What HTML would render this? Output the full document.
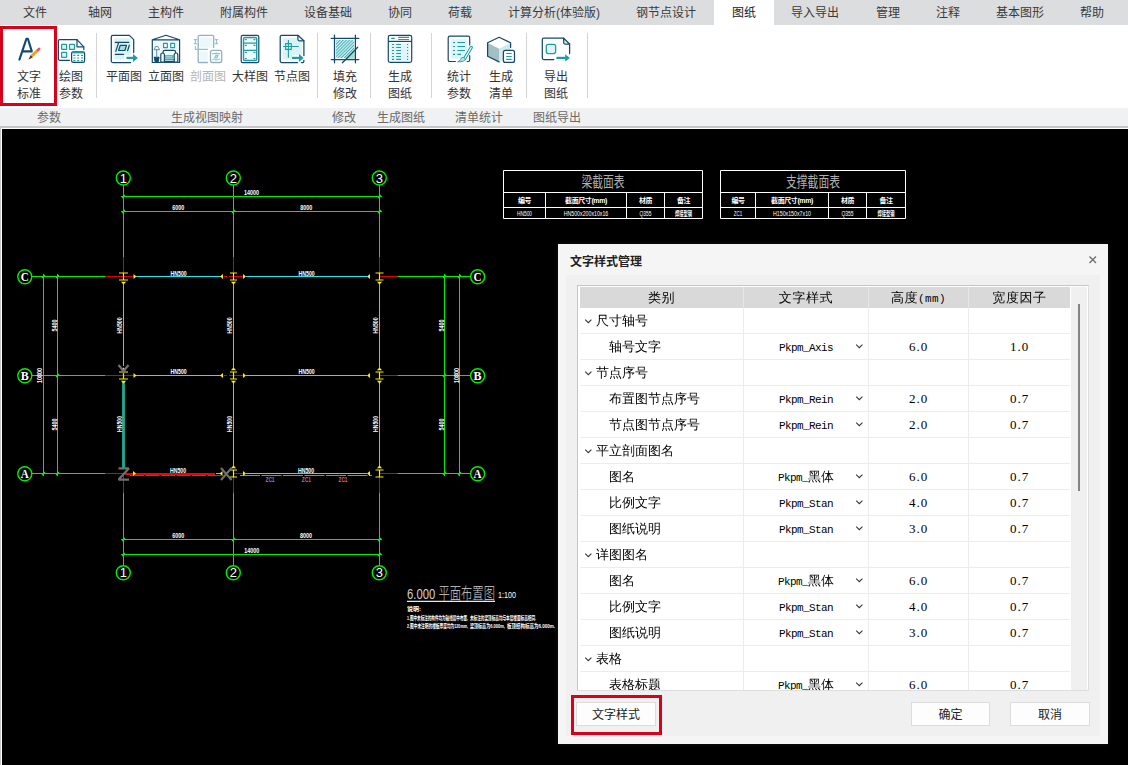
<!DOCTYPE html>
<html lang="zh-CN">
<head>
<meta charset="utf-8">
<title>图纸 - 文字样式管理</title>
<style>
html,body{margin:0;padding:0;}
body{width:1128px;height:765px;overflow:hidden;background:#000;position:relative;font-family:"Liberation Sans","Noto Sans CJK SC",sans-serif;font-size:12px;color:#333;}
.abs{position:absolute;}
#tabbar{position:absolute;left:0;top:0;width:1128px;height:25px;background:#dcdddf;}
#tabbar span{position:absolute;top:0;height:25px;line-height:27px;font-size:12px;color:#3a3a3a;transform:translateX(-50%);white-space:nowrap;}
#tabactive{position:absolute;left:714px;top:0;width:60px;height:25px;background:#fff;}
#ribbon{position:absolute;left:0;top:25px;width:1128px;height:83px;background:#fff;}
#grpbar{position:absolute;left:0;top:108px;width:1128px;height:18px;background:#eff1f2;}
#grpbar span{position:absolute;top:0;line-height:21px;font-size:12px;color:#6a6a6a;transform:translateX(-50%);white-space:nowrap;}
.rb{position:absolute;font-size:12px;line-height:17px;color:#333;text-align:center;transform:translateX(-50%);white-space:nowrap;}
.rb.dis{color:#b4b4b4;}
.sep{position:absolute;top:33px;width:1px;height:65px;background:#d4d4d4;}
#frame1{position:absolute;left:0;top:126px;width:1128px;height:2px;background:#c6c6c6;}
#frame2{position:absolute;left:0;top:128px;width:1128px;height:1px;background:#fff;}
#frameL1{position:absolute;left:0;top:126px;width:1px;height:639px;background:#c6c6c6;}
#frameL2{position:absolute;left:1px;top:128px;width:1px;height:637px;background:#fff;}
#canvas{position:absolute;left:2px;top:129px;width:1126px;height:636px;background:#000;}
.redbox{position:absolute;border:3px solid #d9001b;box-sizing:border-box;}
/* dialog */
#dlg{position:absolute;left:558px;top:244px;width:550px;height:500px;background:#f5f5f5;box-shadow:0 0 5px rgba(70,70,70,.3);}
#dlgtitle{position:absolute;left:12px;top:0;height:31px;line-height:36px;font-size:12px;font-weight:700;color:#222;}
#dlgbody{position:absolute;left:8px;top:31px;width:534px;height:461px;background:#f0f0f0;}
#tbl{position:absolute;left:577px;top:285px;width:512px;height:406px;box-sizing:border-box;border:1px solid #c6c6c6;border-right-color:#dedede;border-bottom-color:#dedede;background:#fff;}
#tblin{position:absolute;left:580px;top:287px;width:490px;height:403px;background:#fff;overflow:hidden;font-family:"Liberation Serif","WenQuanYi Zen Hei",serif;font-size:13px;color:#000;}
#sbar{position:absolute;left:1071px;top:287px;width:16px;height:403px;background:#f0f0f0;}
#thumb{position:absolute;left:1078px;top:304px;width:2px;height:187px;background:#848484;}
.hd{position:absolute;top:0;height:21px;background:#d9d9d9;line-height:22px;text-align:center;letter-spacing:0.6px;}
.row{position:absolute;left:0;width:490px;height:25px;border-bottom:1px solid #ececec;line-height:25px;}
.row span{position:absolute;top:0;white-space:nowrap;}
.vl{position:absolute;top:21px;width:1px;height:382px;background:#ececec;}
.c1g{left:16px;letter-spacing:0;}
.c1c{left:29px;letter-spacing:0;}
.c2{left:164px;width:124px;text-align:center;}
.c2 i,.hd i{font-style:normal;font-family:'Liberation Mono',monospace;font-size:11px;letter-spacing:-0.6px;}
.hd i{letter-spacing:0.4px;}
.c3{left:289px;width:99px;text-align:center;letter-spacing:1px;}
.c4{left:389px;width:101px;text-align:center;letter-spacing:1px;}
.btn{position:absolute;box-sizing:border-box;border:1px solid #dcdcdc;background:#fdfdfd;font-size:12px;color:#222;text-align:center;line-height:25px;height:24px;overflow:hidden;}
</style>
</head>
<body>
<div id="tabbar">
<div id="tabactive"></div>
<span style="left:35px">文件</span><span style="left:100px">轴网</span><span style="left:166px">主构件</span><span style="left:244px">附属构件</span><span style="left:328px">设备基础</span><span style="left:400px">协同</span><span style="left:460px">荷载</span><span style="left:554px">计算分析(体验版)</span><span style="left:666px">钢节点设计</span><span style="left:744px;color:#222">图纸</span><span style="left:815px">导入导出</span><span style="left:888px">管理</span><span style="left:948px">注释</span><span style="left:1020px">基本图形</span><span style="left:1092px">帮助</span>
</div>
<div id="ribbon"></div>
<!--RIBBON_START-->
<div class="rb" style="left:29px;top:69px">文字<br>标准</div>
<div class="rb" style="left:71px;top:69px">绘图<br>参数</div>
<div class="rb" style="left:124px;top:69px">平面图</div>
<div class="rb" style="left:166px;top:69px">立面图</div>
<div class="rb dis" style="left:208px;top:69px">剖面图</div>
<div class="rb" style="left:250px;top:69px">大样图</div>
<div class="rb" style="left:292px;top:69px">节点图</div>
<div class="rb" style="left:345px;top:69px">填充<br>修改</div>
<div class="rb" style="left:400px;top:69px">生成<br>图纸</div>
<div class="rb" style="left:459px;top:69px">统计<br>参数</div>
<div class="rb" style="left:501px;top:69px">生成<br>清单</div>
<div class="rb" style="left:556px;top:69px">导出<br>图纸</div>
<div class="sep" style="left:96px"></div><div class="sep" style="left:317px"></div><div class="sep" style="left:370px"></div><div class="sep" style="left:431px"></div><div class="sep" style="left:526px"></div><div class="sep" style="left:587px"></div>
<div class="redbox" style="left:0;top:26px;width:57px;height:80px"></div>
<svg class="abs" style="left:0;top:25px" width="620" height="83" viewBox="0 25 620 83" fill="none" stroke-linecap="round" stroke-linejoin="round">
<!-- icon1: A + pencil -->
<g stroke="#14496e" stroke-width="2.1">
<path d="M19.4 59.6 L26.4 38.8 L27.9 38.8 L31.8 51.4 M22.3 51.4 H31.8"/>
</g>
<path d="M31.8 56 L38 50" stroke="#f5a30c" stroke-width="2.9" stroke-linecap="butt"/>
<path d="M38 50 L39.2 48.85" stroke="#f2506a" stroke-width="2.6" stroke-linecap="round"/>
<path d="M30.6 54.9 L33 57.3 L28.4 59.8 Z" fill="#5b3a2a" stroke="none"/>
<!-- icon2: doc + grid -->
<g stroke="#14496e" stroke-width="1.2">
<path d="M69.5 60.3 H59.6 Q58.4 60.3 58.4 59.1 V40.8 Q58.4 39.6 59.6 39.6 H77 L83.8 46.8 V49.6"/>
<path d="M77 39.6 V46.8 H83.8"/>
</g>
<g stroke="#1f9ba3" stroke-width="1.2" fill="#e2f6f8">
<rect x="61.6" y="44.4" width="5" height="5" rx="0.6"/><rect x="69.5" y="44.4" width="5" height="5" rx="0.6"/><rect x="61.6" y="52.4" width="5" height="5" rx="0.6"/>
</g>
<rect x="71.6" y="51.8" width="13" height="10.6" rx="1.6" fill="#fff" stroke="#14496e" stroke-width="1.2"/>
<path d="M72.2 52.4 H84" stroke="#1f9ba3" stroke-width="2" stroke-linecap="butt"/>
<g stroke="#1f9ba3" stroke-width="1.1" stroke-linecap="butt">
<path d="M73.4 55.4h2M77.2 55.4h2M81 55.4h2M73.4 58h2M77.2 58h2M81 58h2M73.4 60.6h2M77.2 60.6h2M81 60.6h2"/>
</g>
<!-- icon3: plan view -->
<path d="M114.2 38.2 H130.7 V55 H124 V59.5 H114.2 Z" fill="#d9f3f6" stroke="none"/>
<g stroke="#14496e" stroke-width="1.25">
<path d="M130.6 62.5 H112.8 Q111.3 62.5 111.3 61 V36.9 Q111.3 35.4 112.8 35.4 H129.4 L133.7 39.6 V52.6"/>
</g>
<g stroke="#14496e" stroke-width="1.2">
<path d="M115.3 42.4 H128.8 M118.6 42.6 L115.8 51.4 M129.3 45.2 L127.6 50.7 M115.3 54.4 H123.4"/>
<path d="M120.2 45.4 H126.5 L124.9 50.5 H118.6 Z" fill="#a6e0d9"/>
</g>
<path d="M126.4 57.9 H133.4" stroke="#1f9ba3" stroke-width="2.2" stroke-linecap="butt"/>
<path d="M133 54 L137.9 57.9 L133 61.9 Z" fill="#1f9ba3" stroke="none"/>
<!-- icon4: elevation (house) -->
<path d="M152.3 40 H179.6 V62.5 H152.3 Z" fill="#eef9fb" stroke="none"/>
<g stroke="#14496e" stroke-width="1.2">
<path d="M152.3 39.8 L165.9 35.3 L179.6 39.8 M152.3 39.8 V62.5 H179.6 V39.8 Z"/>
<path d="M163 54 V52.2 Q163 50.4 164.8 50.4 H173.8 Q175.6 50.4 175.6 52.2 V54" fill="#fff"/>
<path d="M160.8 62.2 V55 Q160.8 53 162.6 53 Q164.4 53 164.4 55 V59.8 H174.2 V55 Q174.2 53 176 53 Q177.8 53 177.8 55 V62.2 Z" fill="#fff"/>
<path d="M164.4 59.8 V61.4 H174.2 V59.8" fill="#fff"/>
<path d="M154.4 57.4 H158.9 L158 62.2 H155.3 Z" fill="#14496e"/>
</g>
<g stroke="#5d8fb0" stroke-width="1">
<path d="M156.7 49.4 V57.2 M154.3 49.4 L155.6 46.5 H157.9 L159.4 49.4 Z" fill="#fff"/>
</g>
<g stroke="#1f9ba3" stroke-width="1.1" fill="#eaf8fa">
<rect x="163.5" y="43.4" width="3.9" height="4.2"/><rect x="170.7" y="43.4" width="3.9" height="4.2"/>
<rect x="165.6" y="55.7" width="7.4" height="2.4" fill="#a6e0d9" stroke-width="0.8"/>
</g>
<!-- icon5: section (disabled) -->
<g opacity="0.55">
<rect x="200" y="37.2" width="11.8" height="10.4" fill="#dcf3f8"/><rect x="200" y="51.4" width="7.6" height="9.2" fill="#dcf3f8"/>
<path d="M207.6 62.5 H199.4 Q198.2 62.5 198.2 61.3 V36.5 Q198.2 35.3 199.4 35.3 H212.5 Q213.7 35.3 213.7 36.5 V47.4" stroke="#3f6f95" stroke-width="1.3"/>
<rect x="210.5" y="50.4" width="11.2" height="12.1" rx="2" stroke="#3f6f95" stroke-width="1.3" fill="#fff"/>
<g stroke="#1fa6aa" stroke-width="1.1">
<path d="M195.4 39.8 V43.4 M194.2 39.6 H196.6 M194.2 43.6 H196.6 M216.5 39.8 V43.4 M215.3 39.6 H217.7 M215.3 43.6 H217.7"/>
<path d="M195.4 46.4 V49.4 H207.6"/>
<path d="M212.5 53.6 H219.8 M216.1 52.6 V53.6 M212.5 59.3 H219.8 M216.1 59.3 V60.3"/>
<path d="M214.6 57.6 L216 55.4 H218.2 L216.8 57.6 Z" fill="#7fd3d0"/>
</g>
</g>
<!-- icon6: detail -->
<rect x="241.2" y="35.3" width="17.6" height="27.3" rx="1.6" fill="#fff" stroke="#14496e" stroke-width="1.2"/>
<rect x="243.5" y="37.5" width="13.2" height="23" rx="1.6" fill="#eefafc" stroke="#1f9ba3" stroke-width="1.4"/>
<g stroke="#1f9ba3" stroke-width="1.2">
<path d="M244 43.2 H256.4 M244 50.3 H256.4"/>
<path d="M245.4 39.6h.8M254 39.6h.8M245.4 45.4h.8M254 45.4h.8M245.4 52.4h.8M254 52.4h.8M245.4 58.6h.8M254 58.6h.8" stroke-width="1.4"/>
</g>
<!-- icon7: node -->
<path d="M282.8 38 H297 V41.6 H301.9 V55 H292 V59.5 H282.8 Z" fill="#d9f3f6" stroke="none"/>
<g stroke="#14496e" stroke-width="1.25">
<path d="M297.6 62.5 H281.7 Q280.2 62.5 280.2 61 V36.8 Q280.2 35.3 281.7 35.3 H297.9 L303.9 40.8 V55.6"/>
<path d="M297.9 35.3 V39.6 Q297.9 40.8 299.1 40.8 H303.9" />
<path d="M303.9 60.4 V61.2 Q303.9 62.5 302.6 62.5 H301.4"/>
</g>
<g stroke="#1f9ba3" stroke-width="1.1" stroke-linecap="butt">
<path d="M288.4 40 V57.8 M283.2 46.5 H298.8"/>
<rect x="285.6" y="43.6" width="5.7" height="5.8" fill="none"/>
</g>
<path d="M292 57.9 H299.4" stroke="#1f9ba3" stroke-width="2.2" stroke-linecap="butt"/>
<path d="M299 54 L303.7 57.9 L299 61.9 Z" fill="#1f9ba3" stroke="none"/>
<!-- icon8: hatch -->
<defs><pattern id="hat" width="2.2" height="2.2" patternUnits="userSpaceOnUse" patternTransform="rotate(-45)"><rect width="2.2" height="2.2" fill="#e4f7f8"/><rect width="2.2" height="1" fill="#2fa9ae"/></pattern></defs>
<rect x="336" y="40" width="18" height="18" rx="1.5" fill="url(#hat)" stroke="none"/>
<path d="M354.7 50.6 V58.8 H346.6 Z" fill="#9fe0d6" stroke="none"/>
<g stroke="#14496e" stroke-width="1.25">
<path d="M334.5 35.2 V62.8 M355.4 35.2 V62.8 M331.2 38.4 H358.8 M331.2 59.5 H358.8"/>
<path d="M342.4 62.8 L357.7 47.2" stroke-width="1.3"/>
</g>
<!-- icon9: sheet list -->
<rect x="390.4" y="43.2" width="19.2" height="17.4" fill="#dff5f8" stroke="none"/>
<rect x="388.3" y="35.4" width="23.4" height="27" rx="1.8" stroke="#14496e" stroke-width="1.2"/>
<path d="M388.3 41.4 H411.7" stroke="#14496e" stroke-width="1.2" stroke-linecap="butt"/>
<g stroke="#1f9ba3" stroke-width="1.2" stroke-linecap="butt">
<path d="M391.2 38.4 h3.6 M398.2 37.4 H409 M398.2 39.5 H409"/>
<path d="M392 44.5h2M396.2 44.5h4.8M407 44.5h1.1 M392 47.5h2M396.2 47.5h4.8M407 47.5h1.1 M392 50.5h2M396.2 50.5h4.8M407 50.5h1.1 M392 53.5h2M396.2 53.5h4.8M407 53.5h1.1 M392 56.5h2M396.2 56.5h4.8M407 56.5h1.1 M392 59.4h2M396.2 59.4h4.8M407 59.4h1.1"/>
</g>
<!-- icon10: stats + brush -->
<rect x="451" y="39.2" width="16" height="19.5" fill="#dff5f8" stroke="none"/>
<g stroke="#14496e" stroke-width="1.2">
<path d="M455.4 61.5 H449.8 Q448.2 61.5 448.2 59.9 V37.8 Q448.2 36.2 449.8 36.2 H468.1 Q469.7 36.2 469.7 37.8 V45"/>
<path d="M469.7 55.6 V60 Q469.7 61.5 468.2 61.5 H467.2"/>
</g>
<g stroke="#1f9ba3" stroke-width="1.2" stroke-linecap="butt">
<path d="M453 42.5h2M457.4 42.5H465 M453 46.5h2M457.4 46.5H465 M453 50.5h2M457.4 50.5H465 M453 54.4h2M457.4 54.4H461"/>
</g>
<path d="M471.3 47.4 L464.6 58.6" stroke="#1f9ba3" stroke-width="3.2"/>
<path d="M471.3 47.4 L464.6 58.6" stroke="#e9f8f9" stroke-width="1.2"/>
<path d="M458 61.8 Q461 60.5 461.8 57.6 Q464 56.8 465.6 59 Q464.8 62 458 61.8 Z" fill="#bfe8e8" stroke="#1f9ba3" stroke-width="0.9"/>
<!-- icon11: cube + list -->
<path d="M487.6 42.8 L499.1 48.4 V61.9 L487.6 56.3 Z" fill="#a4bfc2" stroke="none"/>
<path d="M499.1 48.4 L510.6 42.8 V56.3 L499.1 61.9 Z" fill="#cfe9ec" stroke="none"/>
<path d="M499.1 37.2 L510.6 42.8 L499.1 48.4 L487.6 42.8 Z" fill="#fff" stroke="none"/>
<path d="M510.6 47.4 V42.8 L499.1 37.2 L487.6 42.8 V56.3 L499.1 61.9" stroke="#14496e" stroke-width="1.25"/>
<rect x="503.4" y="50.4" width="11.1" height="12" rx="2" fill="#fff" stroke="#14496e" stroke-width="1.25"/>
<path d="M506.2 53.5 H511.7 M506.2 56.5 H511.7 M506.2 59.4 H511.7" stroke="#1f9ba3" stroke-width="1.2" stroke-linecap="butt"/>
<!-- icon12: export -->
<path d="M563.7 38.4 V42.8 Q563.7 44 564.9 44 H569.4 Z" fill="#dff5f8" stroke="none"/>
<g stroke="#14496e" stroke-width="1.25">
<path d="M553.8 59.5 H543.8 Q542.3 59.5 542.3 58 V39.7 Q542.3 38.2 543.8 38.2 H563.7 L569.6 44 V53.6"/>
<path d="M563.7 38.2 V42.8 Q563.7 44 564.9 44 H569.6"/>
</g>
<rect x="546.3" y="44.3" width="9.3" height="9.3" rx="2" fill="#e0f6f8" stroke="#1f9ba3" stroke-width="1.3"/>
<path d="M556.4 57.9 H565.6" stroke="#1f9ba3" stroke-width="2.2" stroke-linecap="butt"/>
<path d="M565.2 54.2 L569.9 57.9 L565.2 61.6 Z" fill="#1f9ba3" stroke="none"/>
</svg>
<!--RIBBON_END-->
<div id="grpbar">
<span style="left:49px">参数</span><span style="left:207px">生成视图映射</span><span style="left:344px">修改</span><span style="left:401px">生成图纸</span><span style="left:479px">清单统计</span><span style="left:557px">图纸导出</span>
</div>
<div id="frame1"></div><div id="frame2"></div><div id="frameL1"></div><div id="frameL2"></div>
<div id="canvas"></div>
<!--DRAWING_START-->
<svg class="abs" style="left:2px;top:129px" width="1126" height="636" viewBox="2 129 1126 636" fill="none" font-family="'Liberation Sans','Noto Sans CJK SC',sans-serif">
<path d="M123.5 185 V257.5" stroke="#00ee00"/>
<path d="M123.5 257.5 V276.5" stroke="#e00000"/>
<path d="M123.5 473.5 V492.5" stroke="#e00000"/>
<path d="M123.5 492.5 V566" stroke="#00ee00"/>
<path d="M233.5 185 V257.5" stroke="#00ee00"/>
<path d="M233.5 257.5 V276.5" stroke="#e00000"/>
<path d="M233.5 473.5 V492.5" stroke="#e00000"/>
<path d="M233.5 492.5 V566" stroke="#00ee00"/>
<path d="M379.5 185 V257.5" stroke="#00ee00"/>
<path d="M379.5 257.5 V276.5" stroke="#e00000"/>
<path d="M379.5 473.5 V492.5" stroke="#e00000"/>
<path d="M379.5 492.5 V566" stroke="#00ee00"/>
<path d="M32 276.5 H105" stroke="#00ee00"/>
<path d="M105 276.5 H123.5" stroke="#e00000"/>
<path d="M379.5 276.5 H397.5" stroke="#e00000"/>
<path d="M397.5 276.5 H470" stroke="#00ee00"/>
<path d="M32 375.5 H105" stroke="#00ee00"/>
<path d="M105 375.5 H123.5" stroke="#e00000"/>
<path d="M379.5 375.5 H397.5" stroke="#e00000"/>
<path d="M397.5 375.5 H470" stroke="#00ee00"/>
<path d="M32 473.5 H105" stroke="#00ee00"/>
<path d="M105 473.5 H123.5" stroke="#e00000"/>
<path d="M379.5 473.5 H397.5" stroke="#e00000"/>
<path d="M397.5 473.5 H470" stroke="#00ee00"/>
<path d="M121 196.5 H382 M121 211.5 H382 M121 539.5 H382 M121 554.5 H382" stroke="#00ee00"/>
<path d="M122.0 198.0 L125.0 195.0" stroke="#00ee00" stroke-width="1.2"/>
<path d="M122.0 213.0 L125.0 210.0" stroke="#00ee00" stroke-width="1.2"/>
<path d="M122.0 541.0 L125.0 538.0" stroke="#00ee00" stroke-width="1.2"/>
<path d="M122.0 556.0 L125.0 553.0" stroke="#00ee00" stroke-width="1.2"/>
<path d="M232.0 213.0 L235.0 210.0" stroke="#00ee00" stroke-width="1.2"/>
<path d="M232.0 541.0 L235.0 538.0" stroke="#00ee00" stroke-width="1.2"/>
<path d="M378.0 198.0 L381.0 195.0" stroke="#00ee00" stroke-width="1.2"/>
<path d="M378.0 213.0 L381.0 210.0" stroke="#00ee00" stroke-width="1.2"/>
<path d="M378.0 541.0 L381.0 538.0" stroke="#00ee00" stroke-width="1.2"/>
<path d="M378.0 556.0 L381.0 553.0" stroke="#00ee00" stroke-width="1.2"/>
<path d="M43.5 274 V476 M57.5 274 V476 M444.5 274 V476 M459.5 274 V476" stroke="#00ee00"/>
<path d="M42.0 278.0 L45.0 275.0" stroke="#00ee00" stroke-width="1.2"/>
<path d="M42.0 475.0 L45.0 472.0" stroke="#00ee00" stroke-width="1.2"/>
<path d="M56.0 278.0 L59.0 275.0" stroke="#00ee00" stroke-width="1.2"/>
<path d="M56.0 377.0 L59.0 374.0" stroke="#00ee00" stroke-width="1.2"/>
<path d="M56.0 475.0 L59.0 472.0" stroke="#00ee00" stroke-width="1.2"/>
<path d="M443.0 278.0 L446.0 275.0" stroke="#00ee00" stroke-width="1.2"/>
<path d="M443.0 377.0 L446.0 374.0" stroke="#00ee00" stroke-width="1.2"/>
<path d="M443.0 475.0 L446.0 472.0" stroke="#00ee00" stroke-width="1.2"/>
<path d="M458.0 278.0 L461.0 275.0" stroke="#00ee00" stroke-width="1.2"/>
<path d="M458.0 475.0 L461.0 472.0" stroke="#00ee00" stroke-width="1.2"/>
<g stroke="#22e4ee">
<path d="M136 276.5 H221 M246 276.5 H367"/>
<path d="M136 375.5 H221 M246 375.5 H367"/>
<path d="M246 473.5 H367"/>
<path d="M233.5 284 V368 M233.5 383 V466"/>
<path d="M379.5 284 V368 M379.5 383 V466"/>
<path d="M123.5 284 V366"/>
</g>
<path d="M123.5 382 V468" stroke="#18b094" stroke-width="2.8"/>
<path d="M125 474.0 H215" stroke="#f40000" stroke-width="2"/>
<path d="M130 475.5 H222" stroke="#c0189a" stroke-width="1" stroke-dasharray="14 1.5"/>
<path d="M216 473.5 H222" stroke="#22e4ee"/>
<path d="M240 475.5 H372" stroke="#d65fa6" stroke-width="1" stroke-dasharray="20 1.5"/>
<path d="M123.5 276.5 H134 M224 276.5 H227 M229 276.5 H244" stroke="#e00000"/>
<path d="M123.5 375.5 H134 M224 375.5 H227 M229 375.5 H244" stroke="#e00000"/>
<path d="M233.5 473.5 H244" stroke="#e00000"/>
<g stroke="#ffee00" stroke-width="1.15"><path d="M119.0 273.0 H128.0 M119.0 280.0 H128.0 M123.5 273.0 V280.0"/></g>
<path d="M120.9 281.7 H126.1 L123.5 284.5 Z" fill="#ffee00"/>
<g stroke="#ffee00" stroke-width="1.15"><path d="M230.0 273.0 H237.0 M230.0 280.0 H237.0 M233.5 273.0 V280.0"/></g>
<path d="M230.9 281.7 H236.1 L233.5 284.5 Z" fill="#ffee00"/>
<g stroke="#ffee00" stroke-width="1.15"><path d="M375.5 273.0 H383.5 M375.5 280.0 H383.5 M379.5 273.0 V280.0"/></g>
<path d="M376.9 281.7 H382.1 L379.5 284.5 Z" fill="#ffee00"/>
<g stroke="#ffee00" stroke-width="1.15"><path d="M119.0 372.0 H128.0 M119.0 379.0 H128.0 M123.5 372.0 V379.0"/></g>
<path d="M120.9 380.7 H126.1 L123.5 383.5 Z" fill="#ffee00"/>
<path d="M120.9 370.3 H126.1 L123.5 367.5 Z" fill="#ffee00"/>
<g stroke="#ffee00" stroke-width="1.15"><path d="M230.0 372.0 H237.0 M230.0 379.0 H237.0 M233.5 372.0 V379.0"/></g>
<path d="M230.9 380.7 H236.1 L233.5 383.5 Z" fill="#ffee00"/>
<path d="M230.9 370.3 H236.1 L233.5 367.5 Z" fill="#ffee00"/>
<g stroke="#ffee00" stroke-width="1.15"><path d="M375.5 372.0 H383.5 M375.5 379.0 H383.5 M379.5 372.0 V379.0"/></g>
<path d="M376.9 380.7 H382.1 L379.5 383.5 Z" fill="#ffee00"/>
<path d="M376.9 370.3 H382.1 L379.5 367.5 Z" fill="#ffee00"/>
<g stroke="#ffee00" stroke-width="1.15"><path d="M230.0 470.0 H237.0 M230.0 477.0 H237.0 M233.5 470.0 V477.0"/></g>
<path d="M230.9 468.3 H236.1 L233.5 465.5 Z" fill="#ffee00"/>
<g stroke="#ffee00" stroke-width="1.15"><path d="M375.5 470.0 H383.5 M375.5 477.0 H383.5 M379.5 470.0 V477.0"/></g>
<path d="M376.9 468.3 H382.1 L379.5 465.5 Z" fill="#ffee00"/>
<path d="M133.5 273.9 V279.1 L136.5 276.5 Z" fill="#ffee00"/>
<path d="M223 273.9 V279.1 L220 276.5 Z" fill="#ffee00"/>
<path d="M243 273.9 V279.1 L246 276.5 Z" fill="#ffee00"/>
<path d="M370 273.9 V279.1 L367 276.5 Z" fill="#ffee00"/>
<path d="M133.5 372.9 V378.1 L136.5 375.5 Z" fill="#ffee00"/>
<path d="M223 372.9 V378.1 L220 375.5 Z" fill="#ffee00"/>
<path d="M243 372.9 V378.1 L246 375.5 Z" fill="#ffee00"/>
<path d="M370 372.9 V378.1 L367 375.5 Z" fill="#ffee00"/>
<path d="M133 470.9 V476.1 L136 473.5 Z" fill="#ffee00"/>
<path d="M243 470.9 V476.1 L246 473.5 Z" fill="#ffee00"/>
<path d="M370 470.9 V476.1 L367 473.5 Z" fill="#ffee00"/>
<path d="M222.5 470.9 V476.1 L219.5 473.5 Z" fill="#ffee00"/>
<g stroke="#707070" stroke-width="2.2" stroke-linecap="butt">
<path d="M118.5 365 L123.5 371 L128.5 365 M123.5 371 V373.5"/>
<path d="M118.5 468.4 H128.8 L118.6 479.6 H129" stroke-linejoin="bevel"/>
<path d="M221 468 L231.5 480 M231.5 468 L221 480"/>
</g>
<circle cx="123.3" cy="178" r="7" stroke="#00ee00" stroke-width="1.4" fill="#000"/>
<text x="123.3" y="182.6" text-anchor="middle" font-size="13" fill="#ffffff">1</text>
<circle cx="123.3" cy="572.7" r="7" stroke="#00ee00" stroke-width="1.4" fill="#000"/>
<text x="123.3" y="577.3000000000001" text-anchor="middle" font-size="13" fill="#ffffff">1</text>
<circle cx="233.3" cy="178" r="7" stroke="#00ee00" stroke-width="1.4" fill="#000"/>
<text x="233.3" y="182.6" text-anchor="middle" font-size="13" fill="#ffffff">2</text>
<circle cx="233.3" cy="572.7" r="7" stroke="#00ee00" stroke-width="1.4" fill="#000"/>
<text x="233.3" y="577.3000000000001" text-anchor="middle" font-size="13" fill="#ffffff">2</text>
<circle cx="379.3" cy="178" r="7" stroke="#00ee00" stroke-width="1.4" fill="#000"/>
<text x="379.3" y="182.6" text-anchor="middle" font-size="13" fill="#ffffff">3</text>
<circle cx="379.3" cy="572.7" r="7" stroke="#00ee00" stroke-width="1.4" fill="#000"/>
<text x="379.3" y="577.3000000000001" text-anchor="middle" font-size="13" fill="#ffffff">3</text>
<circle cx="24.8" cy="276.7" r="7" stroke="#00ee00" stroke-width="1.4" fill="#000"/>
<text x="20.8" y="281.3" font-family="'Liberation Serif',serif" font-weight="700" font-size="13.5" fill="#ffffff" textLength="8" lengthAdjust="spacingAndGlyphs">C</text>
<circle cx="477.6" cy="276.7" r="7" stroke="#00ee00" stroke-width="1.4" fill="#000"/>
<text x="473.6" y="281.3" font-family="'Liberation Serif',serif" font-weight="700" font-size="13.5" fill="#ffffff" textLength="8" lengthAdjust="spacingAndGlyphs">C</text>
<circle cx="24.8" cy="375.7" r="7" stroke="#00ee00" stroke-width="1.4" fill="#000"/>
<text x="20.8" y="380.3" font-family="'Liberation Serif',serif" font-weight="700" font-size="13.5" fill="#ffffff" textLength="8" lengthAdjust="spacingAndGlyphs">B</text>
<circle cx="477.6" cy="375.7" r="7" stroke="#00ee00" stroke-width="1.4" fill="#000"/>
<text x="473.6" y="380.3" font-family="'Liberation Serif',serif" font-weight="700" font-size="13.5" fill="#ffffff" textLength="8" lengthAdjust="spacingAndGlyphs">B</text>
<circle cx="24.8" cy="473.7" r="7" stroke="#00ee00" stroke-width="1.4" fill="#000"/>
<text x="20.8" y="478.3" font-family="'Liberation Serif',serif" font-weight="700" font-size="13.5" fill="#ffffff" textLength="8" lengthAdjust="spacingAndGlyphs">A</text>
<circle cx="477.6" cy="473.7" r="7" stroke="#00ee00" stroke-width="1.4" fill="#000"/>
<text x="473.6" y="478.3" font-family="'Liberation Serif',serif" font-weight="700" font-size="13.5" fill="#ffffff" textLength="8" lengthAdjust="spacingAndGlyphs">A</text>
<text x="244.0" y="195" font-size="8" fill="#ffffff" font-weight="700" textLength="15" lengthAdjust="spacingAndGlyphs">14000</text>
<text x="172.3" y="209.8" font-size="8" fill="#ffffff" font-weight="700" textLength="12" lengthAdjust="spacingAndGlyphs">6000</text>
<text x="300.2" y="209.8" font-size="8" fill="#ffffff" font-weight="700" textLength="12" lengthAdjust="spacingAndGlyphs">8000</text>
<text x="172.3" y="538.4" font-size="8" fill="#ffffff" font-weight="700" textLength="12" lengthAdjust="spacingAndGlyphs">6000</text>
<text x="300.0" y="538.4" font-size="8" fill="#ffffff" font-weight="700" textLength="12" lengthAdjust="spacingAndGlyphs">8000</text>
<text x="244.2" y="553.2" font-size="8" fill="#ffffff" font-weight="700" textLength="15" lengthAdjust="spacingAndGlyphs">14000</text>
<text x="50.8" y="325.5" font-size="8" fill="#ffffff" font-weight="700" textLength="12" lengthAdjust="spacingAndGlyphs" transform="rotate(-90 56.8 325.5)">5400</text>
<text x="437.6" y="325.5" font-size="8" fill="#ffffff" font-weight="700" textLength="12" lengthAdjust="spacingAndGlyphs" transform="rotate(-90 443.6 325.5)">5400</text>
<text x="50.8" y="424.5" font-size="8" fill="#ffffff" font-weight="700" textLength="12" lengthAdjust="spacingAndGlyphs" transform="rotate(-90 56.8 424.5)">5400</text>
<text x="437.6" y="424.5" font-size="8" fill="#ffffff" font-weight="700" textLength="12" lengthAdjust="spacingAndGlyphs" transform="rotate(-90 443.6 424.5)">5400</text>
<text x="34.3" y="375.5" font-size="8" fill="#ffffff" font-weight="700" textLength="15" lengthAdjust="spacingAndGlyphs" transform="rotate(-90 41.8 375.5)">10800</text>
<text x="451.1" y="375.5" font-size="8" fill="#ffffff" font-weight="700" textLength="15" lengthAdjust="spacingAndGlyphs" transform="rotate(-90 458.6 375.5)">10800</text>
<text x="170.6" y="275.8" font-size="8" fill="#ffffff" font-weight="700" textLength="16" lengthAdjust="spacingAndGlyphs">HN500</text>
<text x="298.6" y="275.8" font-size="8" fill="#ffffff" font-weight="700" textLength="16" lengthAdjust="spacingAndGlyphs">HN500</text>
<text x="170.6" y="374" font-size="8" fill="#ffffff" font-weight="700" textLength="16" lengthAdjust="spacingAndGlyphs">HN500</text>
<text x="298.6" y="374" font-size="8" fill="#ffffff" font-weight="700" textLength="16" lengthAdjust="spacingAndGlyphs">HN500</text>
<text x="170.0" y="472.6" font-size="8" fill="#ffffff" font-weight="700" textLength="16" lengthAdjust="spacingAndGlyphs">HN500</text>
<text x="298.0" y="472.6" font-size="8" fill="#ffffff" font-weight="700" textLength="16" lengthAdjust="spacingAndGlyphs">HN500</text>
<text x="114.2" y="325.5" font-size="8" fill="#ffffff" font-weight="700" textLength="16" lengthAdjust="spacingAndGlyphs" transform="rotate(-90 122.2 325.5)">HN500</text>
<text x="114.2" y="424" font-size="8" fill="#ffffff" font-weight="700" textLength="16" lengthAdjust="spacingAndGlyphs" transform="rotate(-90 122.2 424)">HN500</text>
<text x="223.8" y="325.5" font-size="8" fill="#ffffff" font-weight="700" textLength="16" lengthAdjust="spacingAndGlyphs" transform="rotate(-90 231.8 325.5)">HN500</text>
<text x="223.8" y="424" font-size="8" fill="#ffffff" font-weight="700" textLength="16" lengthAdjust="spacingAndGlyphs" transform="rotate(-90 231.8 424)">HN500</text>
<text x="369.8" y="325.5" font-size="8" fill="#ffffff" font-weight="700" textLength="16" lengthAdjust="spacingAndGlyphs" transform="rotate(-90 377.8 325.5)">HN500</text>
<text x="369.8" y="424" font-size="8" fill="#ffffff" font-weight="700" textLength="16" lengthAdjust="spacingAndGlyphs" transform="rotate(-90 377.8 424)">HN500</text>
<text x="265.5" y="482.3" font-size="7.5" fill="#d65fa6" font-weight="700" textLength="9" lengthAdjust="spacingAndGlyphs">ZC1</text>
<text x="301.8" y="482.3" font-size="7.5" fill="#d65fa6" font-weight="700" textLength="9" lengthAdjust="spacingAndGlyphs">ZC1</text>
<text x="338.5" y="482.3" font-size="7.5" fill="#d65fa6" font-weight="700" textLength="9" lengthAdjust="spacingAndGlyphs">ZC1</text>
<text x="407" y="598.8" font-size="15.5" fill="#d0d0d0" font-weight="300" textLength="88" lengthAdjust="spacingAndGlyphs">6.000 平面布置图</text>
<path d="M407 601.3 H495" stroke="#e8e8e8" stroke-width="1.2"/>
<text x="498" y="598.2" font-size="9.5" fill="#ffffff" textLength="18" lengthAdjust="spacingAndGlyphs">1:100</text>
<text x="407" y="611.2" font-size="6" fill="#ffffff" font-weight="700">说明:</text>
<text x="407" y="619.9" font-size="5.8" fill="#ffffff" font-weight="700" textLength="61" lengthAdjust="spacingAndGlyphs">1.图中未标注的构件均为轴线居中布置,</text>
<text x="470" y="619.9" font-size="5.8" fill="#ffffff" font-weight="700" textLength="66" lengthAdjust="spacingAndGlyphs">未标注的梁顶标高均与本层楼面标高相同.</text>
<text x="407" y="627.9" font-size="5.8" fill="#ffffff" font-weight="700" textLength="61" lengthAdjust="spacingAndGlyphs">2.图中未注明的楼板厚度均为120mm,</text>
<text x="470" y="627.9" font-size="5.8" fill="#ffffff" font-weight="700" textLength="35" lengthAdjust="spacingAndGlyphs">梁顶标高为6.000m,</text>
<text x="507" y="627.9" font-size="5.8" fill="#ffffff" font-weight="700" textLength="48" lengthAdjust="spacingAndGlyphs">板顶结构标高为6.000m.</text>
<path d="M503.5 170.5 H702.5 V218.5 H503.5 Z M503.5 192.5 H702.5 M503.5 207.5 H702.5" stroke="#ffffff" stroke-width="1"/>
<path d="M545.5 192.5 V218.5" stroke="#ffffff" stroke-width="1"/>
<path d="M626.5 192.5 V218.5" stroke="#ffffff" stroke-width="1"/>
<path d="M664.5 192.5 V218.5" stroke="#ffffff" stroke-width="1"/>
<text x="603.0" y="187" text-anchor="middle" font-size="14.5" fill="#b0b0b0" font-weight="400" textLength="43.2" lengthAdjust="spacingAndGlyphs">梁截面表</text>
<text x="524.5" y="202.6" text-anchor="middle" font-size="7" fill="#ffffff" font-weight="700" letter-spacing="-0.4">编号</text>
<text x="517.0" y="215.6" font-size="7" fill="#ffffff" font-weight="400" textLength="15" lengthAdjust="spacingAndGlyphs">HN500</text>
<text x="586.0" y="202.6" text-anchor="middle" font-size="7" fill="#ffffff" font-weight="700" letter-spacing="-0.4">截面尺寸(mm)</text>
<text x="563.75" y="215.6" font-size="7" fill="#ffffff" font-weight="400" textLength="44.5" lengthAdjust="spacingAndGlyphs">HN500x200x10x16</text>
<text x="645.5" y="202.6" text-anchor="middle" font-size="7" fill="#ffffff" font-weight="700" letter-spacing="-0.4">材质</text>
<text x="639.5" y="215.6" font-size="7" fill="#ffffff" font-weight="400" textLength="12" lengthAdjust="spacingAndGlyphs">Q355</text>
<text x="683.5" y="202.6" text-anchor="middle" font-size="7" fill="#ffffff" font-weight="700" letter-spacing="-0.4">备注</text>
<text x="675.0" y="215.6" font-size="7" fill="#ffffff" font-weight="700" textLength="17" lengthAdjust="spacingAndGlyphs">焊接型钢</text>
<path d="M720.5 170.5 H905.5 V218.5 H720.5 Z M720.5 192.5 H905.5 M720.5 207.5 H905.5" stroke="#ffffff" stroke-width="1"/>
<path d="M755.5 192.5 V218.5" stroke="#ffffff" stroke-width="1"/>
<path d="M828.5 192.5 V218.5" stroke="#ffffff" stroke-width="1"/>
<path d="M866.5 192.5 V218.5" stroke="#ffffff" stroke-width="1"/>
<text x="813.0" y="187" text-anchor="middle" font-size="14.5" fill="#b0b0b0" font-weight="400" textLength="54.0" lengthAdjust="spacingAndGlyphs">支撑截面表</text>
<text x="738.0" y="202.6" text-anchor="middle" font-size="7" fill="#ffffff" font-weight="700" letter-spacing="-0.4">编号</text>
<text x="733.75" y="215.6" font-size="7" fill="#ffffff" font-weight="400" textLength="8.5" lengthAdjust="spacingAndGlyphs">ZC1</text>
<text x="792.0" y="202.6" text-anchor="middle" font-size="7" fill="#ffffff" font-weight="700" letter-spacing="-0.4">截面尺寸(mm)</text>
<text x="773.0" y="215.6" font-size="7" fill="#ffffff" font-weight="400" textLength="38" lengthAdjust="spacingAndGlyphs">H150x150x7x10</text>
<text x="847.5" y="202.6" text-anchor="middle" font-size="7" fill="#ffffff" font-weight="700" letter-spacing="-0.4">材质</text>
<text x="841.5" y="215.6" font-size="7" fill="#ffffff" font-weight="400" textLength="12" lengthAdjust="spacingAndGlyphs">Q355</text>
<text x="886.0" y="202.6" text-anchor="middle" font-size="7" fill="#ffffff" font-weight="700" letter-spacing="-0.4">备注</text>
<text x="877.5" y="215.6" font-size="7" fill="#ffffff" font-weight="700" textLength="17" lengthAdjust="spacingAndGlyphs">焊接型钢</text>
</svg>
<!--DRAWING_END-->
<!--DIALOG_START-->
<div id="dlg"><div id="dlgtitle">文字样式管理</div><div id="dlgbody"></div>
<svg class="abs" style="left:530px;top:11px" width="10" height="10" viewBox="0 0 10 10"><path d="M1.5 1.5 L8 8 M8 1.5 L1.5 8" stroke="#707070" stroke-width="1.4" fill="none"/></svg>
</div>
<div id="tbl"></div><div id="sbar"></div><div id="thumb"></div>
<div id="tblin">
<div class="hd" style="left:0;width:163px">类别</div><div class="hd" style="left:164px;width:124px">文字样式</div><div class="hd" style="left:289px;width:99px">高度<i>(mm)</i></div><div class="hd" style="left:389px;width:101px">宽度因子</div>
<div class="hd" style="left:163px;width:1px;background:#e6e6e6"></div><div class="hd" style="left:288px;width:1px;background:#e6e6e6"></div><div class="hd" style="left:388px;width:1px;background:#e6e6e6"></div>
<div class="vl" style="left:163px"></div><div class="vl" style="left:288px"></div><div class="vl" style="left:388px"></div>
<div class="row" style="top:21px">
<svg class="abs" style="left:3.5px;top:10px" width="9" height="7" viewBox="0 0 9 7"><path d="M1.2 1.6 L4.3 4.7 L7.4 1.6" stroke="#333" stroke-width="1.05" fill="none"/></svg><span class="c1g">尺寸轴号</span>
</div>
<div class="row" style="top:47px">
<span class="c1c">轴号文字</span><span class="c2"><i>Pkpm_Axis</i></span><svg class="abs" style="left:274.5px;top:9px" width="9" height="7" viewBox="0 0 9 7"><path d="M1.2 1.6 L4.3 4.7 L7.4 1.6" stroke="#333" stroke-width="1.05" fill="none"/></svg><span class="c3">6.0</span><span class="c4">1.0</span>
</div>
<div class="row" style="top:73px">
<svg class="abs" style="left:3.5px;top:10px" width="9" height="7" viewBox="0 0 9 7"><path d="M1.2 1.6 L4.3 4.7 L7.4 1.6" stroke="#333" stroke-width="1.05" fill="none"/></svg><span class="c1g">节点序号</span>
</div>
<div class="row" style="top:99px">
<span class="c1c">布置图节点序号</span><span class="c2"><i>Pkpm_Rein</i></span><svg class="abs" style="left:274.5px;top:9px" width="9" height="7" viewBox="0 0 9 7"><path d="M1.2 1.6 L4.3 4.7 L7.4 1.6" stroke="#333" stroke-width="1.05" fill="none"/></svg><span class="c3">2.0</span><span class="c4">0.7</span>
</div>
<div class="row" style="top:125px">
<span class="c1c">节点图节点序号</span><span class="c2"><i>Pkpm_Rein</i></span><svg class="abs" style="left:274.5px;top:9px" width="9" height="7" viewBox="0 0 9 7"><path d="M1.2 1.6 L4.3 4.7 L7.4 1.6" stroke="#333" stroke-width="1.05" fill="none"/></svg><span class="c3">2.0</span><span class="c4">0.7</span>
</div>
<div class="row" style="top:151px">
<svg class="abs" style="left:3.5px;top:10px" width="9" height="7" viewBox="0 0 9 7"><path d="M1.2 1.6 L4.3 4.7 L7.4 1.6" stroke="#333" stroke-width="1.05" fill="none"/></svg><span class="c1g">平立剖面图名</span>
</div>
<div class="row" style="top:177px">
<span class="c1c">图名</span><span class="c2"><i>Pkpm_</i>黑体</span><svg class="abs" style="left:274.5px;top:9px" width="9" height="7" viewBox="0 0 9 7"><path d="M1.2 1.6 L4.3 4.7 L7.4 1.6" stroke="#333" stroke-width="1.05" fill="none"/></svg><span class="c3">6.0</span><span class="c4">0.7</span>
</div>
<div class="row" style="top:203px">
<span class="c1c">比例文字</span><span class="c2"><i>Pkpm_Stan</i></span><svg class="abs" style="left:274.5px;top:9px" width="9" height="7" viewBox="0 0 9 7"><path d="M1.2 1.6 L4.3 4.7 L7.4 1.6" stroke="#333" stroke-width="1.05" fill="none"/></svg><span class="c3">4.0</span><span class="c4">0.7</span>
</div>
<div class="row" style="top:229px">
<span class="c1c">图纸说明</span><span class="c2"><i>Pkpm_Stan</i></span><svg class="abs" style="left:274.5px;top:9px" width="9" height="7" viewBox="0 0 9 7"><path d="M1.2 1.6 L4.3 4.7 L7.4 1.6" stroke="#333" stroke-width="1.05" fill="none"/></svg><span class="c3">3.0</span><span class="c4">0.7</span>
</div>
<div class="row" style="top:255px">
<svg class="abs" style="left:3.5px;top:10px" width="9" height="7" viewBox="0 0 9 7"><path d="M1.2 1.6 L4.3 4.7 L7.4 1.6" stroke="#333" stroke-width="1.05" fill="none"/></svg><span class="c1g">详图图名</span>
</div>
<div class="row" style="top:281px">
<span class="c1c">图名</span><span class="c2"><i>Pkpm_</i>黑体</span><svg class="abs" style="left:274.5px;top:9px" width="9" height="7" viewBox="0 0 9 7"><path d="M1.2 1.6 L4.3 4.7 L7.4 1.6" stroke="#333" stroke-width="1.05" fill="none"/></svg><span class="c3">6.0</span><span class="c4">0.7</span>
</div>
<div class="row" style="top:307px">
<span class="c1c">比例文字</span><span class="c2"><i>Pkpm_Stan</i></span><svg class="abs" style="left:274.5px;top:9px" width="9" height="7" viewBox="0 0 9 7"><path d="M1.2 1.6 L4.3 4.7 L7.4 1.6" stroke="#333" stroke-width="1.05" fill="none"/></svg><span class="c3">4.0</span><span class="c4">0.7</span>
</div>
<div class="row" style="top:333px">
<span class="c1c">图纸说明</span><span class="c2"><i>Pkpm_Stan</i></span><svg class="abs" style="left:274.5px;top:9px" width="9" height="7" viewBox="0 0 9 7"><path d="M1.2 1.6 L4.3 4.7 L7.4 1.6" stroke="#333" stroke-width="1.05" fill="none"/></svg><span class="c3">3.0</span><span class="c4">0.7</span>
</div>
<div class="row" style="top:359px">
<svg class="abs" style="left:3.5px;top:10px" width="9" height="7" viewBox="0 0 9 7"><path d="M1.2 1.6 L4.3 4.7 L7.4 1.6" stroke="#333" stroke-width="1.05" fill="none"/></svg><span class="c1g">表格</span>
</div>
<div class="row" style="top:385px">
<span class="c1c">表格标题</span><span class="c2"><i>Pkpm_</i>黑体</span><svg class="abs" style="left:274.5px;top:9px" width="9" height="7" viewBox="0 0 9 7"><path d="M1.2 1.6 L4.3 4.7 L7.4 1.6" stroke="#333" stroke-width="1.05" fill="none"/></svg><span class="c3">6.0</span><span class="c4">0.7</span>
</div>
</div>
<div class="btn" style="left:576px;top:702px;width:80px">文字样式</div>
<div class="btn" style="left:911px;top:702px;width:79px">确定</div>
<div class="btn" style="left:1010px;top:702px;width:80px">取消</div>
<div class="redbox" style="left:571px;top:695px;width:91px;height:40px"></div>
<!--DIALOG_END-->
</body>
</html>
